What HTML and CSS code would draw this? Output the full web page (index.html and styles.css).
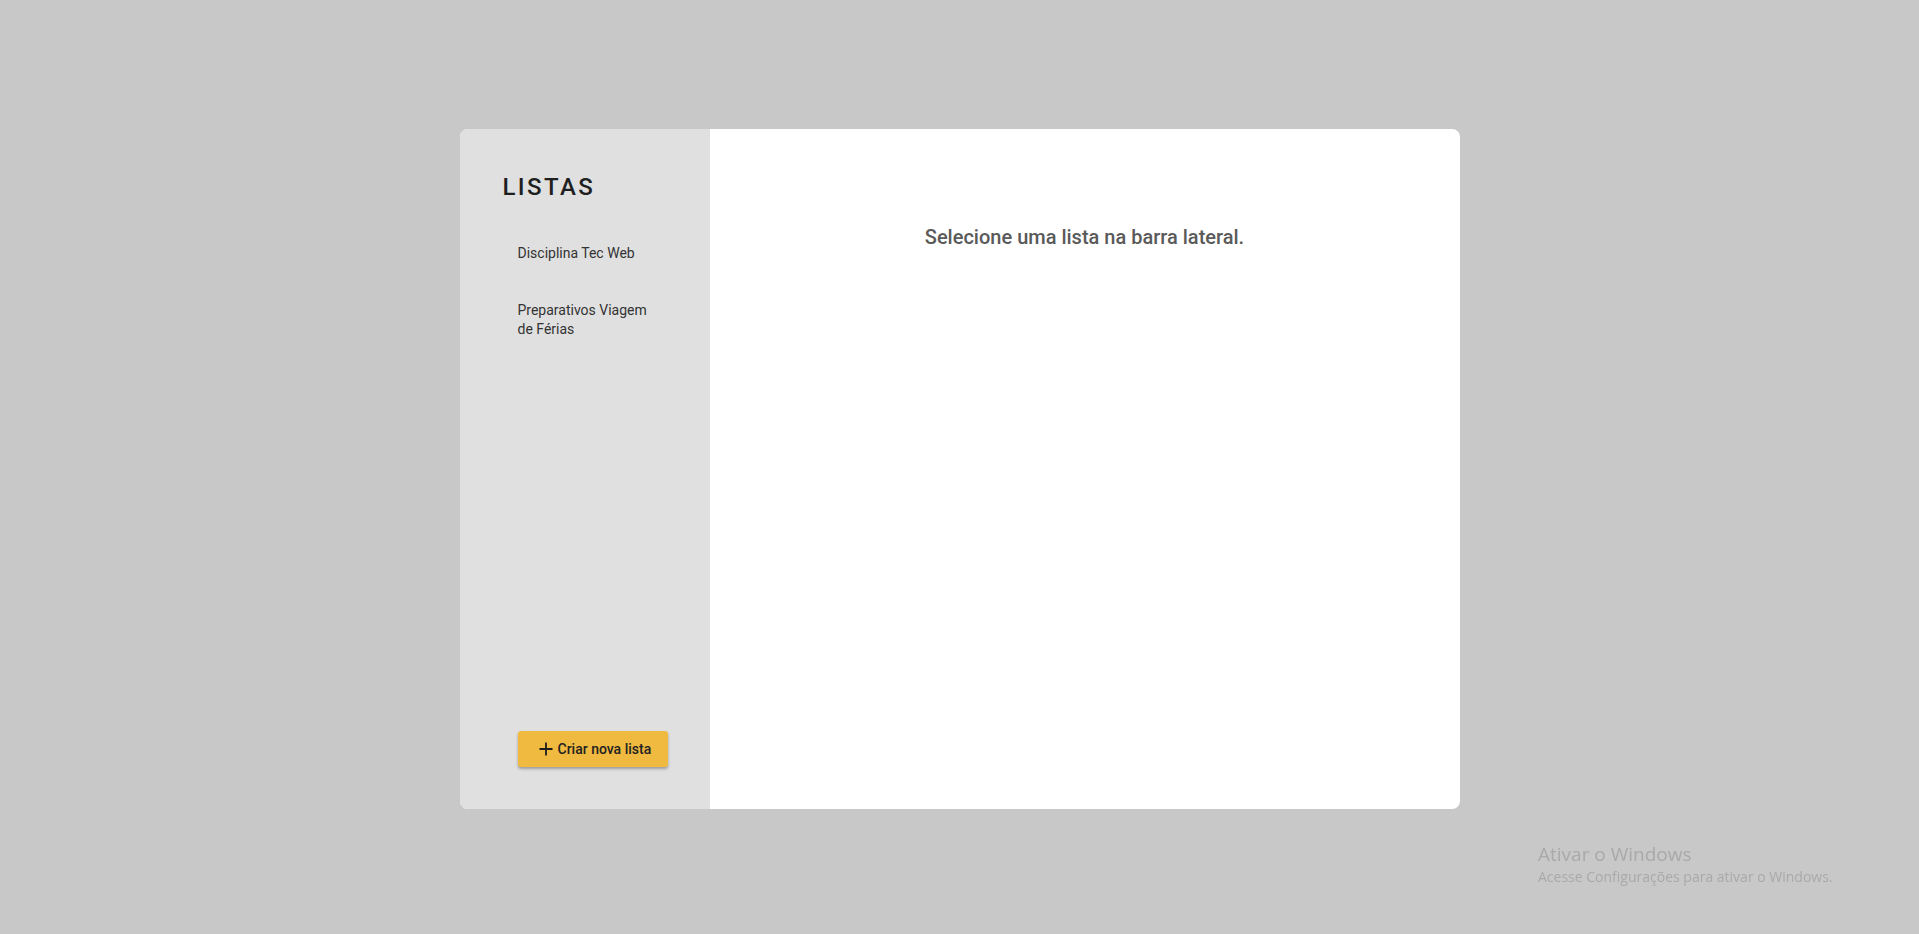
FILE: index.html
```html
<!DOCTYPE html>
<html lang="pt-BR">
<head>
<meta charset="utf-8">
<title>Listas</title>
<link rel="stylesheet" href="styles.css">
</head>
<body>
<div class="page">
  <div class="card">
    <aside class="sidebar">
      <h1 class="title">LISTAS</h1>
      <ul class="lists">
        <li class="list-item">Disciplina Tec Web</li>
        <li class="list-item">Preparativos Viagem de Férias</li>
      </ul>
      <button class="new-btn" type="button">
        <svg class="plus" width="14" height="14" viewBox="0 0 14 14" aria-hidden="true"><path d="M7 0.5V13.5M0.5 7H13.5" stroke="#1d1d1d" stroke-width="1.8" fill="none"/></svg>
        <span>Criar nova lista</span>
      </button>
    </aside>
    <main class="main">
      <h2 class="empty">Selecione uma lista na barra lateral.</h2>
    </main>
  </div>
</div>
<div class="watermark">
  <div class="wm-title">Ativar o Windows</div>
  <div class="wm-sub">Acesse Configurações para ativar o Windows.</div>
</div>
</body>
</html>
```
FILE: styles.css
```css
html, body {
  margin: 0;
  padding: 0;
}
body {
  background: #c8c8c8;
  font-family: Roboto, "Liberation Sans", sans-serif;
  min-height: 100vh;
}
.page {
  padding-top: 129px;
}
.card {
  width: 1000px;
  height: 680px;
  margin: 0 auto;
  display: flex;
  border-radius: 8px;
  overflow: hidden;
  background: #ffffff;
}
.sidebar {
  width: 250px;
  box-sizing: border-box;
  background: #e0e0e0;
  padding: 44px 40px 42px 43px;
  display: flex;
  flex-direction: column;
  align-items: flex-start;
}
.title {
  margin: 0;
  font-size: 24px;
  font-weight: 500;
  letter-spacing: 2.4px;
  line-height: 28px;
  color: #1f1f1f;
}
.lists {
  list-style: none;
  margin: 33px 0 0 0;
  padding: 0;
  width: 170px;
  display: flex;
  flex-direction: column;
  gap: 17px;
}
.list-item {
  padding: 10px 15px 10px 15px;
  box-sizing: border-box;
  width: 167px;
  font-size: 14px;
  line-height: 19.6px;
  color: #333333;
}
.new-btn {
  margin-top: auto;
  margin-left: 15px;
  width: 150px;
  height: 36px;
  border: none;
  border-radius: 3px;
  background: #f0b93f;
  box-shadow: 0 2px 3px rgba(0, 0, 0, 0.3);
  display: flex;
  align-items: center;
  padding: 0 0 0 21px;
  gap: 5px;
  font-family: Roboto, "Liberation Sans", sans-serif;
  font-size: 14px;
  font-weight: 500;
  color: #222222;
  cursor: pointer;
}
.plus {
  flex: none;
}
.main {
  flex: 1;
  padding-top: 96px;
  text-align: center;
}
.empty {
  margin: 0;
  font-size: 20px;
  font-weight: 500;
  color: #5a5a5a;
  line-height: normal;
}
.watermark {
  position: fixed;
  left: 1538px;
  top: 842px;
  color: #a9a9a9;
  font-family: "Open Sans", "Noto Sans", sans-serif;
}
.wm-title {
  font-size: 19px;
  line-height: 25px;
}
.wm-sub {
  font-size: 14px;
  line-height: 19px;
}
```
